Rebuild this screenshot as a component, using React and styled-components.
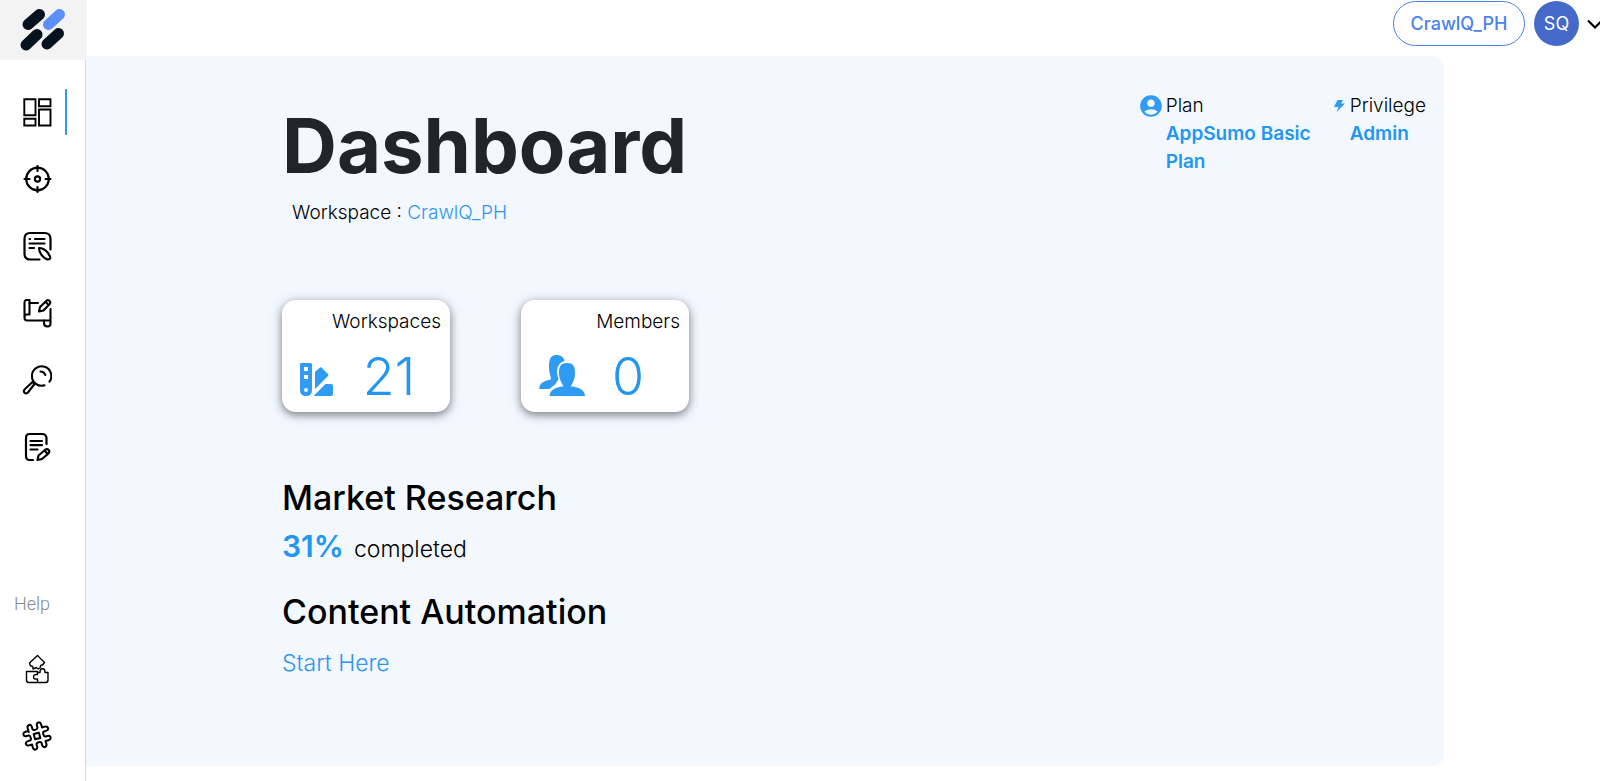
import React from "react";
import styled, { createGlobalStyle } from "styled-components";
import { MdAccountCircle } from "react-icons/md";

const GlobalStyle = createGlobalStyle`
  * {
    box-sizing: border-box;
  }

  body {
    margin: 0;
    background: #fff;
    color: #000;
    font-family: "Inter", "Open Sans", sans-serif;
    overflow-x: hidden;
  }

  a {
    color: inherit;
    text-decoration: none;
  }

  h1, h2, p, dl, dd {
    margin: 0;
  }
`;

const Layout = styled.div`
  display: flex;
  min-height: 100vh;
`;

const Sidebar = styled.aside`
  flex: none;
  width: 86px;
  display: flex;
  flex-direction: column;
  border-right: 1px solid #d6dade;
`;

const LogoLink = styled.a`
  width: 87px;
  height: 60px;
  display: flex;
  background: #f3f3f3;
`;

const Nav = styled.nav`
  display: flex;
  flex-direction: column;
  gap: 21px;
  padding-top: ${({ $top }) => $top}px;
`;

const NavLink = styled.a`
  width: 67px;
  height: 46px;
  display: flex;
  align-items: center;
  padding-left: 22px;
  border-right: 2px solid ${({ $active }) => ($active ? "#2f9bf3" : "transparent")};
`;

const HelpNav = styled.div`
  margin-top: auto;
  padding-bottom: 22px;
`;

const HelpLabel = styled.p`
  padding-left: 14px;
  color: #85898e;
  font-family: "Roboto", sans-serif;
  font-size: 18px;
  font-weight: 300;
  line-height: 24px;
`;

const Main = styled.div`
  flex: 1;
  min-width: 0;
  display: flex;
  flex-direction: column;
`;

const Header = styled.header`
  height: 56px;
  display: flex;
  align-items: flex-start;
  justify-content: flex-end;
  gap: 9px;
  padding-top: 1px;
`;

const WorkspaceButton = styled.button`
  width: 132px;
  height: 45px;
  padding: 0;
  border: 1px solid #4a82ec;
  border-radius: 23px;
  background: #fff;
  color: #4a82ec;
  font-family: inherit;
  font-size: 18px;
  font-weight: 500;
`;

const AccountButton = styled.button`
  display: flex;
  align-items: center;
  gap: 8px;
  padding: 0;
  border: 0;
  background: none;
`;

const Avatar = styled.span`
  width: 45px;
  height: 45px;
  display: flex;
  align-items: center;
  justify-content: center;
  border-radius: 50%;
  background: #4469c9;
  color: #fff;
  font-family: "Inter", sans-serif;
  font-size: 18px;
`;

const ChevronBox = styled.span`
  width: 13px;
  height: 16px;
  overflow: hidden;
`;

const Panel = styled.main`
  flex: 1;
  display: flex;
  align-items: flex-start;
  justify-content: space-between;
  margin: 0 156px 15px 0;
  padding: 36px 18px 36px 196px;
  border-radius: 0 12px 12px 0;
  background: #f3f8ff;
`;

const Title = styled.h1`
  padding-top: 11px;
  color: #212529;
  font-size: 76px;
  font-weight: 700;
  line-height: 84px;
`;

const Subtitle = styled.p`
  padding: 14px 0 0 10px;
  font-size: 19px;
  font-weight: 300;
  line-height: 24px;
`;

const BlueLink = styled.a`
  color: #2f95f3;
`;

const Cards = styled.div`
  display: flex;
  gap: 71px;
  padding: 75px 0 64px;
`;

const Card = styled.section`
  width: 168px;
  height: 112px;
  display: flex;
  flex-direction: column;
  justify-content: space-between;
  padding: 10px 9px 8px;
  border-radius: 14px;
  background: #fff;
  box-shadow: 0 3px 8px rgba(0, 0, 0, 0.42), 0 2px 14px rgba(60, 80, 100, 0.18);
`;

const CardLabel = styled.h2`
  font-size: 19px;
  font-weight: 300;
  line-height: 24px;
  text-align: right;
`;

const CardBody = styled.div`
  display: flex;
  align-items: flex-end;
`;

const CardIcon = styled.span`
  width: 50px;
  height: 50px;
  display: flex;
  align-items: flex-end;
  padding: 0 0 8px 9px;
`;

const CardNumber = styled.p`
  flex: 1;
  padding-right: 4px;
  color: #2196f3;
  font-size: 52px;
  font-weight: 300;
  line-height: 54px;
  text-align: center;
`;

const SectionTitle = styled.h2`
  font-size: 34px;
  font-weight: 500;
  line-height: 44px;
`;

const Progress = styled.p`
  padding: 4px 0 19px;
  font-size: 23px;
  font-weight: 300;
  line-height: 44px;
`;

const Percent = styled.strong`
  margin-right: 10px;
  color: #2196f3;
  font-size: 30px;
  font-weight: 600;
`;

const Start = styled.p`
  padding-top: 13px;
  font-size: 23px;
  font-weight: 300;
  line-height: 32px;
`;

const AccountInfo = styled.dl`
  display: flex;
  align-items: flex-start;
  gap: 14px;
`;

const InfoItem = styled.div`
  display: grid;
  grid-template-columns: ${({ $icon }) => $icon}px auto;
  column-gap: 4px;
  font-size: 19px;
  line-height: 28px;
`;

const InfoIcon = styled.span`
  display: flex;
  align-items: center;
  justify-content: center;
  color: #2f9bf3;

  svg {
    flex: none;
  }
`;

const InfoTerm = styled.dt`
  font-weight: 300;
`;

const InfoValue = styled.dd`
  grid-column: 2;
  max-width: 154px;
  color: #2196f3;
  font-weight: 600;
`;

const Logo = () => (
  <svg width="87" height="60" viewBox="0 0 87 60" fill="none" strokeLinecap="round" strokeWidth="11">
    <path d="M28 24.500L39.500 14.500M26 45L37 34.500M47 44L58.500 33.500" stroke="#07121f" />
    <path d="M48.500 24.500L59.500 14.500" stroke="#5b8ff9" />
  </svg>
);

const Line = ({ children, width = 2.2 }) => (
  <svg
    width="30"
    height="30"
    viewBox="0 0 30 30"
    fill="none"
    stroke="#000"
    strokeWidth={width}
    strokeLinecap="round"
    strokeLinejoin="round"
  >
    {children}
  </svg>
);

const DashboardIcon = () => (
  <Line width={1.9}>
    <path strokeLinejoin="miter" d="M2.300 2.300H13.500V18.300H2.300ZM2.300 21.800H13.500V28.500H2.300ZM17 2.300H28.500V9.300H17ZM17 12.500H28.500V28.500H17Z" />
  </Line>
);

const TargetIcon = () => (
  <Line>
    <circle cx="15.500" cy="15" r="11.300" />
    <circle cx="15.500" cy="15" r="2.600" />
    <path d="M15.500 2V7M15.500 23V28M2.500 15H7.500M23.500 15H28.500" />
  </Line>
);

const ArticleIcon = () => (
  <Line width={2.2}>
    <path d="M17.500 28.500H8Q2.500 28.500 2.500 22.500V8Q2.500 2 8 2H22.500Q28.500 2 28.500 8V18.500" />
    <path d="M7.500 8H8M13 8H22.500M7.500 12.500H22.500M7.500 17H12" />
    <path d="M17 17Q22 17 26 22L28 25.500Q29 28.500 25.500 28.500L22.500 27Q17 22.500 17 17Z" />
  </Line>
);

const BlueprintIcon = () => (
  <Line width={2.1}>
    <path d="M2.500 19V5Q2.500 2 4.500 2H7.500V16.500H4.500Q2.500 16.500 2.500 19.500Q2.500 22.500 5 22.500H22" />
    <path d="M7.500 5H16M28.500 11V25.500Q28.500 28.500 25.500 28.500Q22 28.500 22 25V22.500H28.500" />
    <path d="M17 13.500L18 9L24.500 2.700Q26 1.500 27.600 3Q29 4.500 27.700 6L21.500 12.500ZM23.500 3.700L26.700 7" />
  </Line>
);

const SearchIcon = () => (
  <Line width={2.1}>
    <path d="M22.500 20.300A9.700 9.700 0 1 1 27.500 16.700" />
    <path d="M18.500 6.500Q22 6.500 23.300 10M10.500 17L3 24Q1 26 2.500 27.700Q4.500 29.300 6.300 27L12.500 19Z" />
  </Line>
);

const NoteIcon = () => (
  <Line width={2.2}>
    <path d="M11 28H7.500Q4 28 4 24V6Q4 2 7.500 2H20Q24.500 2 24.500 6.500V12" />
    <path d="M8.500 9H20M8.500 13.200H20M8.500 17.500H15.500" />
    <path d="M15.500 28L16.500 23.500L23.500 17.500Q25.300 16.500 26.700 18Q28 19.500 26.500 21.300L20 27ZM22.500 18.500L25.700 22" />
  </Line>
);

const PuzzleIcon = () => (
  <Line width={1.4}>
    <path d="M15.500 1.500L22.500 8.500L20.500 11Q18 10.500 18.500 13.500Q16 16 14.500 13.500L11 15Q11.500 11.500 8.500 12L7.500 9Z" />
    <path d="M4.500 17.500H15.500V20.500Q11.500 20 11.500 23Q11.500 25.500 15.500 25V28.500M4.500 17.500V26Q4.500 28.500 7 28.500H23.500Q26 28.500 26 26V18.500H23Q23 14.800 20.500 14.800Q18 14.800 18 18.500H15.500" />
  </Line>
);

const HashIcon = () => (
  <Line width={2}>
    <g transform="rotate(-15 15 15)">
      <path d="M8 9V5Q8 2.300 10.200 2.300Q12.400 2.300 12.400 5V7Q12.400 8.500 15 8.500Q17.600 8.500 17.600 7V5Q17.600 2.300 19.800 2.300Q22 2.300 22 5V8H25Q27.700 8 27.700 10.200Q27.700 12.400 25 12.400H23Q21.500 12.400 21.500 15Q21.500 17.600 23 17.600H25Q27.700 17.600 27.700 19.800Q27.700 22 25 22H22V25Q22 27.700 19.800 27.700Q17.600 27.700 17.600 25V23Q17.600 21.500 15 21.500Q12.400 21.500 12.400 23V25Q12.400 27.700 10.200 27.700Q8 27.700 8 25V22H5Q2.300 22 2.300 19.800Q2.300 17.600 5 17.600H7Q8.500 17.600 8.500 15Q8.500 12.400 7 12.400H5Q2.300 12.400 2.300 10.200Q2.300 8 5 8H8Z" />
      <rect x="12.300" y="12.300" width="5.400" height="5.400" />
    </g>
  </Line>
);

const SwatchIcon = () => (
  <svg width="33" height="33" viewBox="0 0 33 33" fill="#2f9bf3">
    <path
      fillRule="evenodd"
      d="M1.500 0H10.500Q12 0 12 1.500V27Q12 33 6 33Q0 33 0 27V1.500Q0 0 1.500 0ZM4 4V8H8V4ZM4 12V16H8V12ZM6 25A2 2 0 1 0 6 29A2 2 0 1 0 6 25Z"
    />
    <path d="M15 9L20 4.500Q21 4 22 5L28 11Q29 12 28 13L15 26ZM14 32.500L25.500 21H31Q33 21 33 23V31Q33 33 31 33H14Z" />
  </svg>
);

const MembersIcon = () => (
  <svg width="46" height="41" viewBox="0 0 46 41" fill="#2f9bf3" overflow="visible">
    <path d="M17.500 0C22 0 25 2.500 25.500 6Q18.500 8 18 15.500Q18 20 19.500 24Q18 28.500 10.500 34H0Q0 26 12 24.500C12 21 10 19 10 12C10 5 11 0 17.500 0Z" />
    <path d="M28 8C34 8 36 11 36 18C36 25 33 28.500 32 31.500Q45.500 32.500 46 41H10.500Q11 32.500 24.500 31.500C23 28 20 25 20 18C20 11 22 8 28 8Z" />
  </svg>
);

const BoltIcon = () => (
  <svg width="11" height="12" viewBox="0 0 11 12" fill="currentColor">
    <path d="M3.500 0H9L7 3.500H11L2.500 12L4.500 7H0Z" />
  </svg>
);

const ChevronIcon = () => (
  <svg width="16" height="16" viewBox="0 0 16 16" fill="none" stroke="#000" strokeWidth="2.200">
    <path d="M1 4.500L8 11.500L15 4.500" />
  </svg>
);

const navItems = [
  { label: "Dashboard", Icon: DashboardIcon, active: true },
  { label: "Audience", Icon: TargetIcon },
  { label: "Articles", Icon: ArticleIcon },
  { label: "Blueprints", Icon: BlueprintIcon },
  { label: "Research", Icon: SearchIcon },
  { label: "Notes", Icon: NoteIcon },
];

const helpItems = [
  { label: "Integrations", Icon: PuzzleIcon },
  { label: "Slack", Icon: HashIcon },
];

const cards = [
  { label: "Workspaces", value: 21, Icon: SwatchIcon },
  { label: "Members", value: 0, Icon: MembersIcon },
];

const renderLinks = (items) =>
  items.map(({ label, Icon, active }) => (
    <NavLink key={label} href="#" aria-label={label} $active={active}>
      <Icon />
    </NavLink>
  ));

export default function App() {
  return (
    <>
      <GlobalStyle />
      <Layout>
        <Sidebar>
          <LogoLink href="#" aria-label="Home">
            <Logo />
          </LogoLink>
          <Nav $top={29}>{renderLinks(navItems)}</Nav>
          <HelpNav>
            <HelpLabel>Help</HelpLabel>
            <Nav $top={30}>{renderLinks(helpItems)}</Nav>
          </HelpNav>
        </Sidebar>
        <Main>
          <Header>
            <WorkspaceButton type="button">CrawlQ_PH</WorkspaceButton>
            <AccountButton type="button" aria-label="Account menu">
              <Avatar>SQ</Avatar>
              <ChevronBox>
                <ChevronIcon />
              </ChevronBox>
            </AccountButton>
          </Header>
          <Panel>
            <div>
              <Title>Dashboard</Title>
              <Subtitle>
                Workspace : <BlueLink href="#">CrawlQ_PH</BlueLink>
              </Subtitle>
              <Cards>
                {cards.map(({ label, value, Icon }) => (
                  <Card key={label}>
                    <CardLabel>{label}</CardLabel>
                    <CardBody>
                      <CardIcon>
                        <Icon />
                      </CardIcon>
                      <CardNumber>{value}</CardNumber>
                    </CardBody>
                  </Card>
                ))}
              </Cards>
              <SectionTitle>Market Research</SectionTitle>
              <Progress>
                <Percent>31%</Percent>completed
              </Progress>
              <SectionTitle>Content Automation</SectionTitle>
              <Start>
                <BlueLink href="#">Start Here</BlueLink>
              </Start>
            </div>
            <AccountInfo>
              <InfoItem $icon={22}>
                <InfoIcon>
                  <MdAccountCircle size={26} />
                </InfoIcon>
                <InfoTerm>Plan</InfoTerm>
                <InfoValue>AppSumo Basic Plan</InfoValue>
              </InfoItem>
              <InfoItem $icon={12}>
                <InfoIcon>
                  <BoltIcon />
                </InfoIcon>
                <InfoTerm>Privilege</InfoTerm>
                <InfoValue>Admin</InfoValue>
              </InfoItem>
            </AccountInfo>
          </Panel>
        </Main>
      </Layout>
    </>
  );
}
